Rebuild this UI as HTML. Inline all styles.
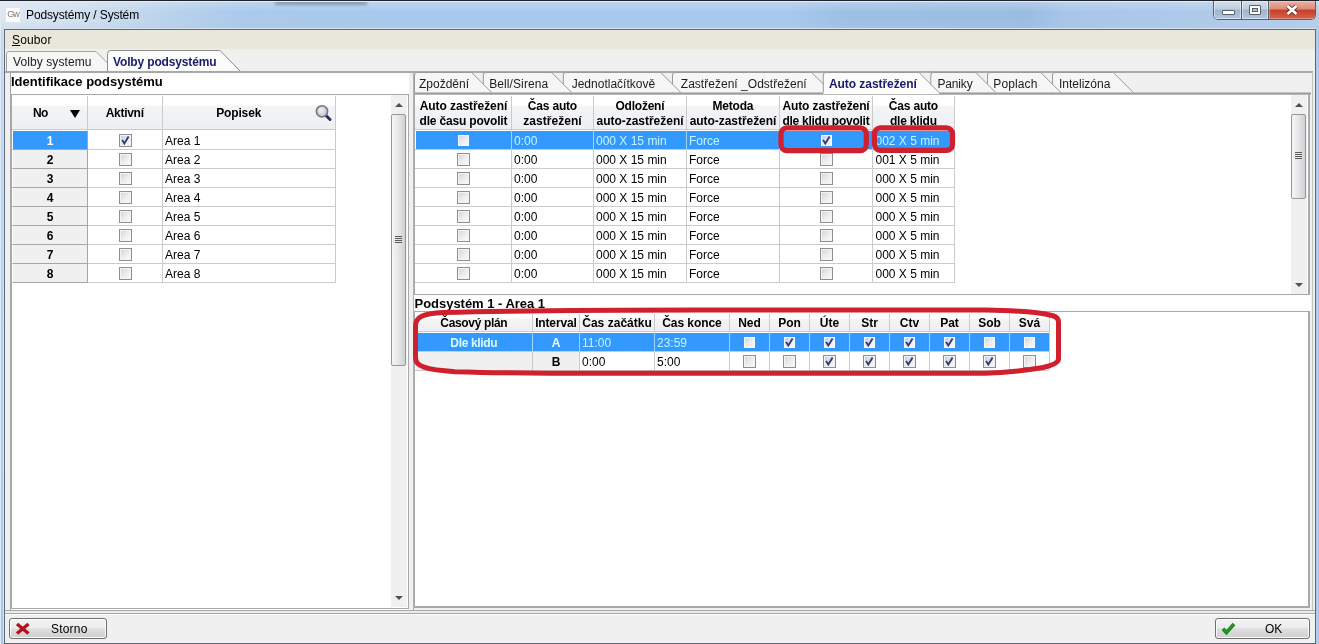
<!DOCTYPE html>
<html lang="cs"><head><meta charset="utf-8"><title>Podsystémy / Systém</title>
<style>
*{box-sizing:border-box;margin:0;padding:0}
html,body{width:1319px;height:644px;overflow:hidden}
body{position:relative;background:#a9c6e8;font-family:"Liberation Sans",sans-serif;font-size:12px;color:#000}
div,span{position:absolute}
.t{white-space:nowrap;line-height:14px}
.b{font-weight:bold}
.w{color:#fff}
.cy{color:#c4f4ff}
.cb{width:13px;height:13px;border:1px solid #8e8f8f;background:linear-gradient(135deg,#d2d2d2 0%,#ececec 50%,#fdfdfd 100%);box-shadow:inset 0 0 0 1px #f4f4f4}
.cb.ck{background:linear-gradient(135deg,#c4cbe0 0%,#e4e8f4 50%,#fdfdfd 100%)}

.cb.sl{border-color:#3399ff;box-shadow:inset 0 0 0 1px #fbfbfb}
.cb svg{position:absolute;left:-1px;top:-1px}
.hl{background:#cbcbcb;height:1px}
.vl{background:#cbcbcb;width:1px}
.hd{background:linear-gradient(#fff 0%,#fff 28%,#f3f4f6 34%,#eeeff2 100%)}
.sb{background:#f0f0f0;width:16px}
.th{width:15px;border:1px solid #979797;border-radius:2px;background:linear-gradient(90deg,#f6f6f6,#e6e6e8 50%,#cfd0d3)}
</style></head><body>
<div style="left:0;top:0;width:1319px;height:644px;will-change:transform">

<div style="left:0;top:0;width:1319px;height:644px;background:linear-gradient(#c6d8ec 0,#c0d6ee 120px,#b6d4f3 200px,#b0d0f0 400px,#a6c6ea 644px)"></div>
<div style="left:0;top:0;width:1319px;height:30px;background:linear-gradient(90deg,#dde7f2 0%,#d0e0f0 6%,#bcd4ec 12%,#abcaeb 18%,#a8c9ed 30%,#a8c9ed 60%,#9fc0e5 64%,#9cbde2 78%,#a8c6e9 81%,#b4ceec 100%)"></div>
<div style="left:0;top:0;width:1319px;height:30px;background:linear-gradient(rgba(235,240,245,.35),rgba(255,255,255,0) 40%,rgba(255,255,255,0) 70%,rgba(190,200,210,.3) 100%)"></div>
<div style="left:0;top:1px;width:2px;height:1px;background:#20242a"></div><div style="left:0;top:2px;width:1px;height:1px;background:#20242a"></div>
<div style="left:275px;top:1px;width:92px;height:4px;background:#5a6a80;opacity:.55;filter:blur(1.5px)"></div>
<div style="left:0;top:0;width:1319px;height:1px;background:#20242a"></div>
<div style="left:0;top:1px;width:1319px;height:1px;background:#e2edf8"></div>
<div style="left:0;top:1px;width:1px;height:643px;background:#dfeaf6"></div>
<div style="left:3px;top:30px;width:1px;height:613px;background:#d2e5f8"></div>
<div style="left:1316px;top:30px;width:3px;height:614px;background:linear-gradient(90deg,#a6c2e6,#b8d0ee 50%,#a3c0e4)"></div>
<div style="left:6px;top:8px;width:14px;height:14px;background:#fcfcfc"></div>
<div class="t" style="left:6px;top:8px;width:14px;font-size:9px;line-height:13px;color:#7a7a7a;text-align:center;letter-spacing:-1px">Gw</div>
<div class="t ttl" style="left:26.0px;top:8px;letter-spacing:-0.124px;">Podsystémy / Systém</div>
<div style="left:1213px;top:1px;width:103px;height:19px;border:1px solid #56616f;border-top:0;border-radius:0 0 5px 5px;overflow:hidden;background:#fff"><div style="left:0;top:0;width:28px;height:18px;background:linear-gradient(#d3dfec 0%,#bccde0 45%,#9eb4cd 50%,#b3c8de 100%);border-right:1px solid #56616f;box-shadow:inset 0 0 0 1px rgba(255,255,255,.45)"></div><div style="left:28px;top:0;width:27px;height:18px;background:linear-gradient(#d3dfec 0%,#bccde0 45%,#9eb4cd 50%,#b3c8de 100%);border-right:1px solid #56616f;box-shadow:inset 0 0 0 1px rgba(255,255,255,.45)"></div><div style="left:55px;top:0;width:47px;height:18px;background:linear-gradient(#e9b3a4 0%,#dc8b78 45%,#c63f28 50%,#d6644c 100%);box-shadow:inset 0 0 0 1px rgba(255,255,255,.3)"></div><div style="left:8px;top:9px;width:13px;height:5px;background:#fff;border:1px solid #55606e;border-radius:1px"></div><div style="left:35px;top:4px;width:12px;height:10px;background:#fff;border:1px solid #55606e;border-radius:1px"></div><div style="left:38px;top:7px;width:6px;height:4px;background:#a9bfd8;border:1px solid #55606e"></div><svg style="position:absolute;left:70px;top:2px" width="16" height="14" viewBox="0 0 16 14"><path d="M3.5 3 L12.500 11 M12.500 3 L3.500 11" stroke="#54241c" stroke-width="4.400" fill="none" opacity=".75"/><path d="M3.500 3 L12.500 11 M12.500 3 L3.500 11" stroke="#fff" stroke-width="2.600" fill="none"/></svg></div>
<div style="left:4px;top:28px;width:1312px;height:1px;background:#d4e4f4"></div>
<div style="left:4px;top:29px;width:1312px;height:615px;background:#f0f0f0;border:1px solid #5f6a78"></div>
<div style="left:5px;top:30px;width:1310px;height:19px;background:#e9e7db"></div>
<div class="t" style="left:12.0px;top:33px;letter-spacing:0.135px;"><u>S</u>oubor</div>
<svg style="position:absolute;left:5px;top:49px" width="260" height="24" viewBox="5 49 260 24">
<path d="M6.500 72 V54 Q6.500 51.500 9 51.500 H96 L116 71.500 H6.500" fill="#f6f6f6" stroke="#a3a3a3"/>
<path d="M107.500 72 V53.500 Q107.500 50.500 110.500 50.500 H220 L240.500 71.500" fill="#fcfcfc" stroke="#8c8c8c"/>
</svg>
<div class="t" style="left:13.0px;top:55px;letter-spacing:0.095px;color:#222;">Volby systemu</div>
<div class="t b" style="left:113.0px;top:55px;letter-spacing:-0.149px;color:#181c6c;">Volby podsystému</div>
<div style="left:5px;top:71px;width:1308px;height:2px;background:#a8a8a8"></div>
<div style="left:5px;top:73px;width:404px;height:537px;background:#fff"></div>
<div style="left:5px;top:73px;width:6px;height:537px;background:#f0f0f0;border-right:1px solid #a8a8a8"></div>
<div class="t b" style="left:11.0px;top:75px;font-size:13px;">Identifikace podsystému</div>
<div style="left:11px;top:94px;width:398px;height:515px;border:1px solid #a9a9a9;background:#fff"></div>
<div class="hd" style="left:12px;top:95px;width:323px;height:34px"></div>
<div class="hl" style="left:12px;top:129px;width:324px"></div>
<div class="vl" style="left:87px;top:96px;height:186px"></div>
<div class="vl" style="left:162px;top:96px;height:186px"></div>
<div class="vl" style="left:335px;top:96px;height:186px"></div>
<div class="t b" style="left:33.0px;top:106px;letter-spacing:-0.598px;">No</div>
<div style="left:70px;top:110px;width:0;height:0;border-left:5px solid transparent;border-right:5px solid transparent;border-top:8px solid #000"></div>
<div class="t b" style="left:105.7px;top:106px;letter-spacing:-0.286px;">Aktivní</div>
<div class="t b" style="left:216.2px;top:106px;letter-spacing:-0.145px;">Popisek</div>
<svg style="position:absolute;left:314px;top:103px" width="19" height="19" viewBox="0 0 19 19">
<line x1="12" y1="12.500" x2="16" y2="16.500" stroke="#2d2a6a" stroke-width="3" stroke-linecap="round"/>
<circle cx="8" cy="8.300" r="5.600" fill="#cfd2d8" stroke="#74777e" stroke-width="1.600"/>
<circle cx="7.300" cy="7.500" r="2.800" fill="#e6e8ec"/>
</svg>
<div style="left:13px;top:131px;width:74px;height:18px;background:#3399ff"></div>
<div class="t b" style="left:46.7px;top:134px;color:#fff;">1</div>
<span class="cb ck" style="left:119px;top:134px"><svg width="13" height="13" viewBox="0 0 13 13"><path d="M3.1 5.900 L5.300 9.500 L9.600 2.500" fill="none" stroke="#2f3a6e" stroke-width="1.800"/></svg></span>
<div class="t" style="left:165.0px;top:134px;">Area 1</div>
<div class="hl" style="left:12px;top:149px;width:324px"></div>
<div style="left:13px;top:149px;width:75px;height:1px;background:#a6a6a6"></div>
<div style="left:13px;top:150px;width:74px;height:18px;background:#f0f0f0"></div>
<div class="t b" style="left:46.7px;top:153px;">2</div>
<span class="cb" style="left:119px;top:153px"></span>
<div class="t" style="left:165.0px;top:153px;">Area 2</div>
<div class="hl" style="left:12px;top:168px;width:324px"></div>
<div style="left:13px;top:168px;width:75px;height:1px;background:#a6a6a6"></div>
<div style="left:13px;top:169px;width:74px;height:18px;background:#f0f0f0"></div>
<div class="t b" style="left:46.7px;top:172px;">3</div>
<span class="cb" style="left:119px;top:172px"></span>
<div class="t" style="left:165.0px;top:172px;">Area 3</div>
<div class="hl" style="left:12px;top:187px;width:324px"></div>
<div style="left:13px;top:187px;width:75px;height:1px;background:#a6a6a6"></div>
<div style="left:13px;top:188px;width:74px;height:18px;background:#f0f0f0"></div>
<div class="t b" style="left:46.7px;top:191px;">4</div>
<span class="cb" style="left:119px;top:191px"></span>
<div class="t" style="left:165.0px;top:191px;">Area 4</div>
<div class="hl" style="left:12px;top:206px;width:324px"></div>
<div style="left:13px;top:206px;width:75px;height:1px;background:#a6a6a6"></div>
<div style="left:13px;top:207px;width:74px;height:18px;background:#f0f0f0"></div>
<div class="t b" style="left:46.7px;top:210px;">5</div>
<span class="cb" style="left:119px;top:210px"></span>
<div class="t" style="left:165.0px;top:210px;">Area 5</div>
<div class="hl" style="left:12px;top:225px;width:324px"></div>
<div style="left:13px;top:225px;width:75px;height:1px;background:#a6a6a6"></div>
<div style="left:13px;top:226px;width:74px;height:18px;background:#f0f0f0"></div>
<div class="t b" style="left:46.7px;top:229px;">6</div>
<span class="cb" style="left:119px;top:229px"></span>
<div class="t" style="left:165.0px;top:229px;">Area 6</div>
<div class="hl" style="left:12px;top:244px;width:324px"></div>
<div style="left:13px;top:244px;width:75px;height:1px;background:#a6a6a6"></div>
<div style="left:13px;top:245px;width:74px;height:18px;background:#f0f0f0"></div>
<div class="t b" style="left:46.7px;top:248px;">7</div>
<span class="cb" style="left:119px;top:248px"></span>
<div class="t" style="left:165.0px;top:248px;">Area 7</div>
<div class="hl" style="left:12px;top:263px;width:324px"></div>
<div style="left:13px;top:263px;width:75px;height:1px;background:#a6a6a6"></div>
<div style="left:13px;top:264px;width:74px;height:18px;background:#f0f0f0"></div>
<div class="t b" style="left:46.7px;top:267px;">8</div>
<span class="cb" style="left:119px;top:267px"></span>
<div class="t" style="left:165.0px;top:267px;">Area 8</div>
<div class="hl" style="left:12px;top:282px;width:324px"></div>
<div style="left:13px;top:282px;width:75px;height:1px;background:#a6a6a6"></div>
<div style="left:87px;top:131px;width:1px;height:152px;background:#a6a6a6"></div>
<div class="sb" style="left:391px;top:95px;height:512px"></div>
<div class="th" style="left:391px;top:114px;height:252px"></div>
<div style="left:395px;top:103px;width:0;height:0;border-left:4px solid transparent;border-right:4px solid transparent;border-bottom:4px solid #505050"></div>
<div style="left:395px;top:596px;width:0;height:0;border-left:4px solid transparent;border-right:4px solid transparent;border-top:4px solid #505050"></div>
<div style="left:395px;top:236px;width:7px;height:1px;background:#5a5a5a"></div>
<div style="left:395px;top:238px;width:7px;height:1px;background:#5a5a5a"></div>
<div style="left:395px;top:240px;width:7px;height:1px;background:#5a5a5a"></div>
<div style="left:395px;top:242px;width:7px;height:1px;background:#5a5a5a"></div>
<div style="left:413px;top:71px;width:900px;height:539px;background:#f0f0f0;border-top:2px solid #a8a8a8;border-left:1px solid #b0b0b0;border-right:1px solid #c0c0c0"></div>
<svg style="position:absolute;left:414px;top:71px" width="897" height="24" viewBox="414 71 897 24"><path d="M414 93.500 H1311" stroke="#9c9c9c" stroke-width="2" fill="none"/><path d="M1052.5 92 V75 Q1052.5 72.500 1055.0 72.500 H1113.3 L1133.3 92.500 V92 Z" fill="#f6f6f6" stroke="none"/><path d="M1052.5 92.500 V75 Q1052.5 72.500 1055.0 72.500 H1113.3 L1133.3 92.500" fill="none" stroke="#9a9a9a"/><path d="M987.5 92 V75 Q987.5 72.500 990.0 72.500 H1040.8 L1060.8 92.500 V92 Z" fill="#f6f6f6" stroke="none"/><path d="M987.5 92.500 V75 Q987.5 72.500 990.0 72.500 H1040.8 L1060.8 92.500" fill="none" stroke="#9a9a9a"/><path d="M930.8 92 V75 Q930.8 72.500 933.3 72.500 H975.8 L995.8 92.500 V92 Z" fill="#f6f6f6" stroke="none"/><path d="M930.8 92.500 V75 Q930.8 72.500 933.3 72.500 H975.8 L995.8 92.500" fill="none" stroke="#9a9a9a"/><path d="M672.5 92 V75 Q672.5 72.500 675.0 72.500 H811.7 L831.7 92.500 V92 Z" fill="#f6f6f6" stroke="none"/><path d="M672.5 92.500 V75 Q672.5 72.500 675.0 72.500 H811.7 L831.7 92.500" fill="none" stroke="#9a9a9a"/><path d="M563.3 92 V75 Q563.3 72.500 565.8 72.500 H660.8 L680.8 92.500 V92 Z" fill="#f6f6f6" stroke="none"/><path d="M563.3 92.500 V75 Q563.3 72.500 565.8 72.500 H660.8 L680.8 92.500" fill="none" stroke="#9a9a9a"/><path d="M483.3 92 V75 Q483.3 72.500 485.8 72.500 H551.7 L571.7 92.500 V92 Z" fill="#f6f6f6" stroke="none"/><path d="M483.3 92.500 V75 Q483.3 72.500 485.8 72.500 H551.7 L571.7 92.500" fill="none" stroke="#9a9a9a"/><path d="M414.5 92 V75 Q414.5 72.500 417.0 72.500 H471.7 L491.7 92.500 V92 Z" fill="#f6f6f6" stroke="none"/><path d="M414.5 92.500 V75 Q414.5 72.500 417.0 72.500 H471.7 L491.7 92.500" fill="none" stroke="#9a9a9a"/><path d="M823.3 94 V75 Q823.3 72.500 825.8 72.500 H919 L939 92.500 V94 Z" fill="#fbfbfb" stroke="none"/><path d="M823.3 92.500 V75 Q823.3 72.500 825.8 72.500 H919 L939 92.500" fill="none" stroke="#9a9a9a"/></svg>
<div class="t" style="left:419.0px;top:77px;color:#1c1c1c;">Zpoždění</div>
<div class="t" style="left:489.2px;top:77px;letter-spacing:0.097px;color:#1c1c1c;">Bell/Sirena</div>
<div class="t" style="left:571.7px;top:77px;color:#1c1c1c;">Jednotlačítkově</div>
<div class="t" style="left:680.8px;top:77px;letter-spacing:0.024px;color:#1c1c1c;">Zastřežení _Odstřežení</div>
<div class="t b" style="left:829.0px;top:77px;letter-spacing:-0.065px;color:#181c6c;">Auto zastřežení</div>
<div class="t" style="left:937.5px;top:77px;letter-spacing:-0.169px;color:#1c1c1c;">Paniky</div>
<div class="t" style="left:993.3px;top:77px;letter-spacing:0.120px;color:#1c1c1c;">Poplach</div>
<div class="t" style="left:1059.0px;top:77px;color:#1c1c1c;">Intelizóna</div>
<div style="left:414px;top:94px;width:896px;height:201px;border:1px solid #a9a9a9;border-top-color:#b8b8b8;border-right:2px solid #a9a9a9;background:#fff"></div>
<div class="hd" style="left:415px;top:95px;width:540px;height:34px"></div>
<div class="t b" style="left:419.7px;top:99px;letter-spacing:-0.078px;">Auto zastřežení</div>
<div class="t b" style="left:419.5px;top:114px;letter-spacing:-0.180px;">dle času povolit</div>
<div class="t b" style="left:527.8px;top:99px;letter-spacing:-0.184px;">Čas auto</div>
<div class="t b" style="left:523.3px;top:114px;letter-spacing:0.038px;">zastřežení</div>
<div class="t b" style="left:615.5px;top:99px;letter-spacing:-0.233px;">Odložení</div>
<div class="t b" style="left:596.5px;top:114px;letter-spacing:-0.023px;">auto-zastřežení</div>
<div class="t b" style="left:712.5px;top:99px;letter-spacing:-0.199px;">Metoda</div>
<div class="t b" style="left:689.7px;top:114px;letter-spacing:-0.050px;">auto-zastřežení</div>
<div class="t b" style="left:782.4px;top:99px;letter-spacing:-0.098px;">Auto zastřežení</div>
<div class="t b" style="left:782.4px;top:114px;letter-spacing:-0.255px;">dle klidu povolit</div>
<div class="t b" style="left:888.8px;top:99px;letter-spacing:-0.184px;">Čas auto</div>
<div class="t b" style="left:889.9px;top:114px;letter-spacing:-0.185px;">dle klidu</div>
<div class="vl" style="left:511px;top:96px;height:187px"></div>
<div class="vl" style="left:593px;top:96px;height:187px"></div>
<div class="vl" style="left:686px;top:96px;height:187px"></div>
<div class="vl" style="left:779px;top:96px;height:187px"></div>
<div class="vl" style="left:872px;top:96px;height:187px"></div>
<div class="vl" style="left:954px;top:96px;height:187px"></div>
<div class="hl" style="left:415px;top:129px;width:540px"></div>
<div style="left:416px;top:131px;width:538px;height:18px;background:#3399ff"></div>
<div style="left:511px;top:131px;width:1px;height:18px;background:#9ad4ff"></div>
<div style="left:593px;top:131px;width:1px;height:18px;background:#9ad4ff"></div>
<div style="left:686px;top:131px;width:1px;height:18px;background:#9ad4ff"></div>
<div style="left:779px;top:131px;width:1px;height:18px;background:#9ad4ff"></div>
<div style="left:872px;top:131px;width:1px;height:18px;background:#9ad4ff"></div>
<span class="cb sl" style="left:457px;top:134px"></span>
<div class="t" style="left:514.0px;top:134px;color:#c4f4ff;">0:00</div>
<div class="t" style="left:596.0px;top:134px;color:#c4f4ff;">000 X 15 min</div>
<div class="t" style="left:689.0px;top:134px;color:#c4f4ff;">Force</div>
<span class="cb ck sl" style="left:820px;top:134px"><svg width="13" height="13" viewBox="0 0 13 13"><path d="M3.1 5.900 L5.300 9.500 L9.600 2.500" fill="none" stroke="#2f3a6e" stroke-width="1.800"/></svg></span>
<div class="t" style="left:875.5px;top:134px;color:#c4f4ff;">002 X 5 min</div>
<div class="hl" style="left:415px;top:149px;width:540px"></div>
<span class="cb" style="left:457px;top:153px"></span>
<div class="t" style="left:514.0px;top:153px;">0:00</div>
<div class="t" style="left:596.0px;top:153px;">000 X 15 min</div>
<div class="t" style="left:689.0px;top:153px;">Force</div>
<span class="cb" style="left:820px;top:153px"></span>
<div class="t" style="left:875.5px;top:153px;">001 X 5 min</div>
<div class="hl" style="left:415px;top:168px;width:540px"></div>
<span class="cb" style="left:457px;top:172px"></span>
<div class="t" style="left:514.0px;top:172px;">0:00</div>
<div class="t" style="left:596.0px;top:172px;">000 X 15 min</div>
<div class="t" style="left:689.0px;top:172px;">Force</div>
<span class="cb" style="left:820px;top:172px"></span>
<div class="t" style="left:875.5px;top:172px;">000 X 5 min</div>
<div class="hl" style="left:415px;top:187px;width:540px"></div>
<span class="cb" style="left:457px;top:191px"></span>
<div class="t" style="left:514.0px;top:191px;">0:00</div>
<div class="t" style="left:596.0px;top:191px;">000 X 15 min</div>
<div class="t" style="left:689.0px;top:191px;">Force</div>
<span class="cb" style="left:820px;top:191px"></span>
<div class="t" style="left:875.5px;top:191px;">000 X 5 min</div>
<div class="hl" style="left:415px;top:206px;width:540px"></div>
<span class="cb" style="left:457px;top:210px"></span>
<div class="t" style="left:514.0px;top:210px;">0:00</div>
<div class="t" style="left:596.0px;top:210px;">000 X 15 min</div>
<div class="t" style="left:689.0px;top:210px;">Force</div>
<span class="cb" style="left:820px;top:210px"></span>
<div class="t" style="left:875.5px;top:210px;">000 X 5 min</div>
<div class="hl" style="left:415px;top:225px;width:540px"></div>
<span class="cb" style="left:457px;top:229px"></span>
<div class="t" style="left:514.0px;top:229px;">0:00</div>
<div class="t" style="left:596.0px;top:229px;">000 X 15 min</div>
<div class="t" style="left:689.0px;top:229px;">Force</div>
<span class="cb" style="left:820px;top:229px"></span>
<div class="t" style="left:875.5px;top:229px;">000 X 5 min</div>
<div class="hl" style="left:415px;top:244px;width:540px"></div>
<span class="cb" style="left:457px;top:248px"></span>
<div class="t" style="left:514.0px;top:248px;">0:00</div>
<div class="t" style="left:596.0px;top:248px;">000 X 15 min</div>
<div class="t" style="left:689.0px;top:248px;">Force</div>
<span class="cb" style="left:820px;top:248px"></span>
<div class="t" style="left:875.5px;top:248px;">000 X 5 min</div>
<div class="hl" style="left:415px;top:263px;width:540px"></div>
<span class="cb" style="left:457px;top:267px"></span>
<div class="t" style="left:514.0px;top:267px;">0:00</div>
<div class="t" style="left:596.0px;top:267px;">000 X 15 min</div>
<div class="t" style="left:689.0px;top:267px;">Force</div>
<span class="cb" style="left:820px;top:267px"></span>
<div class="t" style="left:875.5px;top:267px;">000 X 5 min</div>
<div class="hl" style="left:415px;top:282px;width:540px"></div>
<div class="sb" style="left:1291px;top:95px;height:199px"></div>
<div class="th" style="left:1291px;top:114px;height:85px"></div>
<div style="left:1295px;top:103px;width:0;height:0;border-left:4px solid transparent;border-right:4px solid transparent;border-bottom:4px solid #505050"></div>
<div style="left:1295px;top:283px;width:0;height:0;border-left:4px solid transparent;border-right:4px solid transparent;border-top:4px solid #505050"></div>
<div style="left:1295px;top:152px;width:7px;height:1px;background:#5a5a5a"></div>
<div style="left:1295px;top:154px;width:7px;height:1px;background:#5a5a5a"></div>
<div style="left:1295px;top:156px;width:7px;height:1px;background:#5a5a5a"></div>
<div style="left:1295px;top:158px;width:7px;height:1px;background:#5a5a5a"></div>
<div style="left:414px;top:295px;width:897px;height:16px;background:#fff"></div>
<div class="t b" style="left:414.5px;top:297px;letter-spacing:-0.026px;font-size:13px;">Podsystém 1 - Area 1</div>
<div style="left:414px;top:311px;width:896px;height:297px;border:1px solid #a9a9a9;border-right:2px solid #a9a9a9;border-bottom:2px solid #a9a9a9;background:#fff"></div>
<div class="hd" style="left:415px;top:313px;width:634px;height:18px"></div>
<div class="t b" style="left:440.3px;top:316px;letter-spacing:-0.335px;">Časový plán</div>
<div class="t b" style="left:535.2px;top:316px;letter-spacing:-0.160px;">Interval</div>
<div class="t b" style="left:582.2px;top:316px;letter-spacing:0.031px;">Čas začátku</div>
<div class="t b" style="left:662.2px;top:316px;letter-spacing:-0.058px;">Čas konce</div>
<div class="t b" style="left:738.2px;top:316px;">Ned</div>
<div class="t b" style="left:778.2px;top:316px;">Pon</div>
<div class="t b" style="left:819.8px;top:316px;">Úte</div>
<div class="t b" style="left:861.2px;top:316px;">Str</div>
<div class="t b" style="left:899.8px;top:316px;">Ctv</div>
<div class="t b" style="left:940.2px;top:316px;">Pat</div>
<div class="t b" style="left:978.2px;top:316px;">Sob</div>
<div class="t b" style="left:1018.8px;top:316px;">Svá</div>
<div class="vl" style="left:532px;top:314px;height:56px"></div>
<div class="vl" style="left:579px;top:314px;height:56px"></div>
<div class="vl" style="left:654px;top:314px;height:56px"></div>
<div class="vl" style="left:729px;top:314px;height:56px"></div>
<div class="vl" style="left:769px;top:314px;height:56px"></div>
<div class="vl" style="left:809px;top:314px;height:56px"></div>
<div class="vl" style="left:849px;top:314px;height:56px"></div>
<div class="vl" style="left:889px;top:314px;height:56px"></div>
<div class="vl" style="left:929px;top:314px;height:56px"></div>
<div class="vl" style="left:969px;top:314px;height:56px"></div>
<div class="vl" style="left:1009px;top:314px;height:56px"></div>
<div class="vl" style="left:1049px;top:314px;height:56px"></div>
<div class="hl" style="left:415px;top:331px;width:634px"></div>
<div style="left:416px;top:333px;width:633px;height:18px;background:#3399ff"></div>
<div style="left:532px;top:333px;width:1px;height:18px;background:#9ad4ff"></div>
<div style="left:579px;top:333px;width:1px;height:18px;background:#9ad4ff"></div>
<div style="left:654px;top:333px;width:1px;height:18px;background:#9ad4ff"></div>
<div style="left:729px;top:333px;width:1px;height:18px;background:#9ad4ff"></div>
<div style="left:769px;top:333px;width:1px;height:18px;background:#9ad4ff"></div>
<div style="left:809px;top:333px;width:1px;height:18px;background:#9ad4ff"></div>
<div style="left:849px;top:333px;width:1px;height:18px;background:#9ad4ff"></div>
<div style="left:889px;top:333px;width:1px;height:18px;background:#9ad4ff"></div>
<div style="left:929px;top:333px;width:1px;height:18px;background:#9ad4ff"></div>
<div style="left:969px;top:333px;width:1px;height:18px;background:#9ad4ff"></div>
<div style="left:1009px;top:333px;width:1px;height:18px;background:#9ad4ff"></div>
<div class="t b" style="left:450.3px;top:336px;letter-spacing:-0.334px;color:#d8fbff;">Dle klidu</div>
<div class="t b" style="left:551.7px;top:336px;color:#f4ffff;">A</div>
<div class="t" style="left:582.0px;top:336px;color:#c4f4ff;">11:00</div>
<div class="t" style="left:657.0px;top:336px;color:#c4f4ff;">23:59</div>
<span class="cb sl" style="left:743px;top:336px"></span>
<span class="cb ck sl" style="left:783px;top:336px"><svg width="13" height="13" viewBox="0 0 13 13"><path d="M3.1 5.900 L5.300 9.500 L9.600 2.500" fill="none" stroke="#2f3a6e" stroke-width="1.800"/></svg></span>
<span class="cb ck sl" style="left:823px;top:336px"><svg width="13" height="13" viewBox="0 0 13 13"><path d="M3.1 5.900 L5.300 9.500 L9.600 2.500" fill="none" stroke="#2f3a6e" stroke-width="1.800"/></svg></span>
<span class="cb ck sl" style="left:863px;top:336px"><svg width="13" height="13" viewBox="0 0 13 13"><path d="M3.1 5.900 L5.300 9.500 L9.600 2.500" fill="none" stroke="#2f3a6e" stroke-width="1.800"/></svg></span>
<span class="cb ck sl" style="left:903px;top:336px"><svg width="13" height="13" viewBox="0 0 13 13"><path d="M3.1 5.900 L5.300 9.500 L9.600 2.500" fill="none" stroke="#2f3a6e" stroke-width="1.800"/></svg></span>
<span class="cb ck sl" style="left:943px;top:336px"><svg width="13" height="13" viewBox="0 0 13 13"><path d="M3.1 5.900 L5.300 9.500 L9.600 2.500" fill="none" stroke="#2f3a6e" stroke-width="1.800"/></svg></span>
<span class="cb sl" style="left:983px;top:336px"></span>
<span class="cb sl" style="left:1023px;top:336px"></span>
<div class="hl" style="left:415px;top:351px;width:634px"></div>
<div style="left:416px;top:352px;width:163px;height:18px;background:#f0f0f0"></div>
<div class="vl" style="left:532px;top:352px;height:18px"></div>
<div class="t b" style="left:551.7px;top:355px;">B</div>
<div class="t" style="left:582.0px;top:355px;">0:00</div>
<div class="t" style="left:657.0px;top:355px;">5:00</div>
<span class="cb" style="left:743px;top:355px"></span>
<span class="cb" style="left:783px;top:355px"></span>
<span class="cb ck" style="left:823px;top:355px"><svg width="13" height="13" viewBox="0 0 13 13"><path d="M3.1 5.900 L5.300 9.500 L9.600 2.500" fill="none" stroke="#2f3a6e" stroke-width="1.800"/></svg></span>
<span class="cb ck" style="left:863px;top:355px"><svg width="13" height="13" viewBox="0 0 13 13"><path d="M3.1 5.900 L5.300 9.500 L9.600 2.500" fill="none" stroke="#2f3a6e" stroke-width="1.800"/></svg></span>
<span class="cb ck" style="left:903px;top:355px"><svg width="13" height="13" viewBox="0 0 13 13"><path d="M3.1 5.900 L5.300 9.500 L9.600 2.500" fill="none" stroke="#2f3a6e" stroke-width="1.800"/></svg></span>
<span class="cb ck" style="left:943px;top:355px"><svg width="13" height="13" viewBox="0 0 13 13"><path d="M3.1 5.900 L5.300 9.500 L9.600 2.500" fill="none" stroke="#2f3a6e" stroke-width="1.800"/></svg></span>
<span class="cb ck" style="left:983px;top:355px"><svg width="13" height="13" viewBox="0 0 13 13"><path d="M3.1 5.900 L5.300 9.500 L9.600 2.500" fill="none" stroke="#2f3a6e" stroke-width="1.800"/></svg></span>
<span class="cb" style="left:1023px;top:355px"></span>
<div class="hl" style="left:415px;top:370px;width:634px"></div>
<svg style="position:absolute;left:0;top:0" width="1319" height="644" viewBox="0 0 1319 644" fill="none" stroke="#d0202e" stroke-width="5.200" stroke-linejoin="round">
<rect x="781" y="127.800" width="85.300" height="22.800" rx="6"/>
<rect x="874.500" y="127.800" width="78" height="22.500" rx="6"/>
<path stroke-width="5" d="M443 312.500 C520 310.500 600 310 700 310 H985 C1015 310.500 1040 312.500 1052 315.500 Q1058.500 317 1058.500 322 V359 Q1058.500 364 1043 367.500 C1025 370.500 1000 373 985 373.300 H625 C560 373.500 500 373 455 371.700 C425 370 415.500 366 415.500 358 V326 C415.500 317 423 313.500 443 312.500 Z"/>
</svg>
<div style="left:5px;top:610px;width:1310px;height:4px;background:#ebebeb;border-top:1px solid #a9a9a9;border-bottom:1px solid #a9a9a9"></div>
<div style="left:5px;top:614px;width:1310px;height:1px;background:#fbfbfb"></div>
<div style="left:9px;top:618px;width:98px;height:21px;border:1px solid #707070;border-radius:3px;background:linear-gradient(#f3f3f3 0%,#ececec 46%,#dedede 52%,#cfcfcf 100%);box-shadow:inset 0 0 0 1px rgba(255,255,255,.85)"></div>
<svg style="position:absolute;left:14px;top:621px" width="18" height="15" viewBox="0 0 18 15"><path d="M3 3 L14.500 12.500 M14.500 3 L3 12.500" stroke="#b5121b" stroke-width="3.400" fill="none"/></svg>
<div class="t" style="left:51.0px;top:622px;letter-spacing:0.191px;">Storno</div>
<div style="left:1215px;top:618px;width:95px;height:21px;border:1px solid #707070;border-radius:3px;background:linear-gradient(#f3f3f3 0%,#ececec 46%,#dedede 52%,#cfcfcf 100%);box-shadow:inset 0 0 0 1px rgba(255,255,255,.85)"></div>
<svg style="position:absolute;left:1220px;top:621px" width="18" height="16" viewBox="0 0 18 16"><path d="M3 7.800 L6.400 11.600 L14 3" stroke="#1b801b" stroke-width="3.600" fill="none"/><path d="M3.600 8.200 L6.400 11.200 L13.600 3.200" stroke="#2a9a2a" stroke-width="1.600" fill="none"/></svg>
<div class="t" style="left:1265.0px;top:622px;letter-spacing:-0.069px;">OK</div>
</div>
</body></html>
